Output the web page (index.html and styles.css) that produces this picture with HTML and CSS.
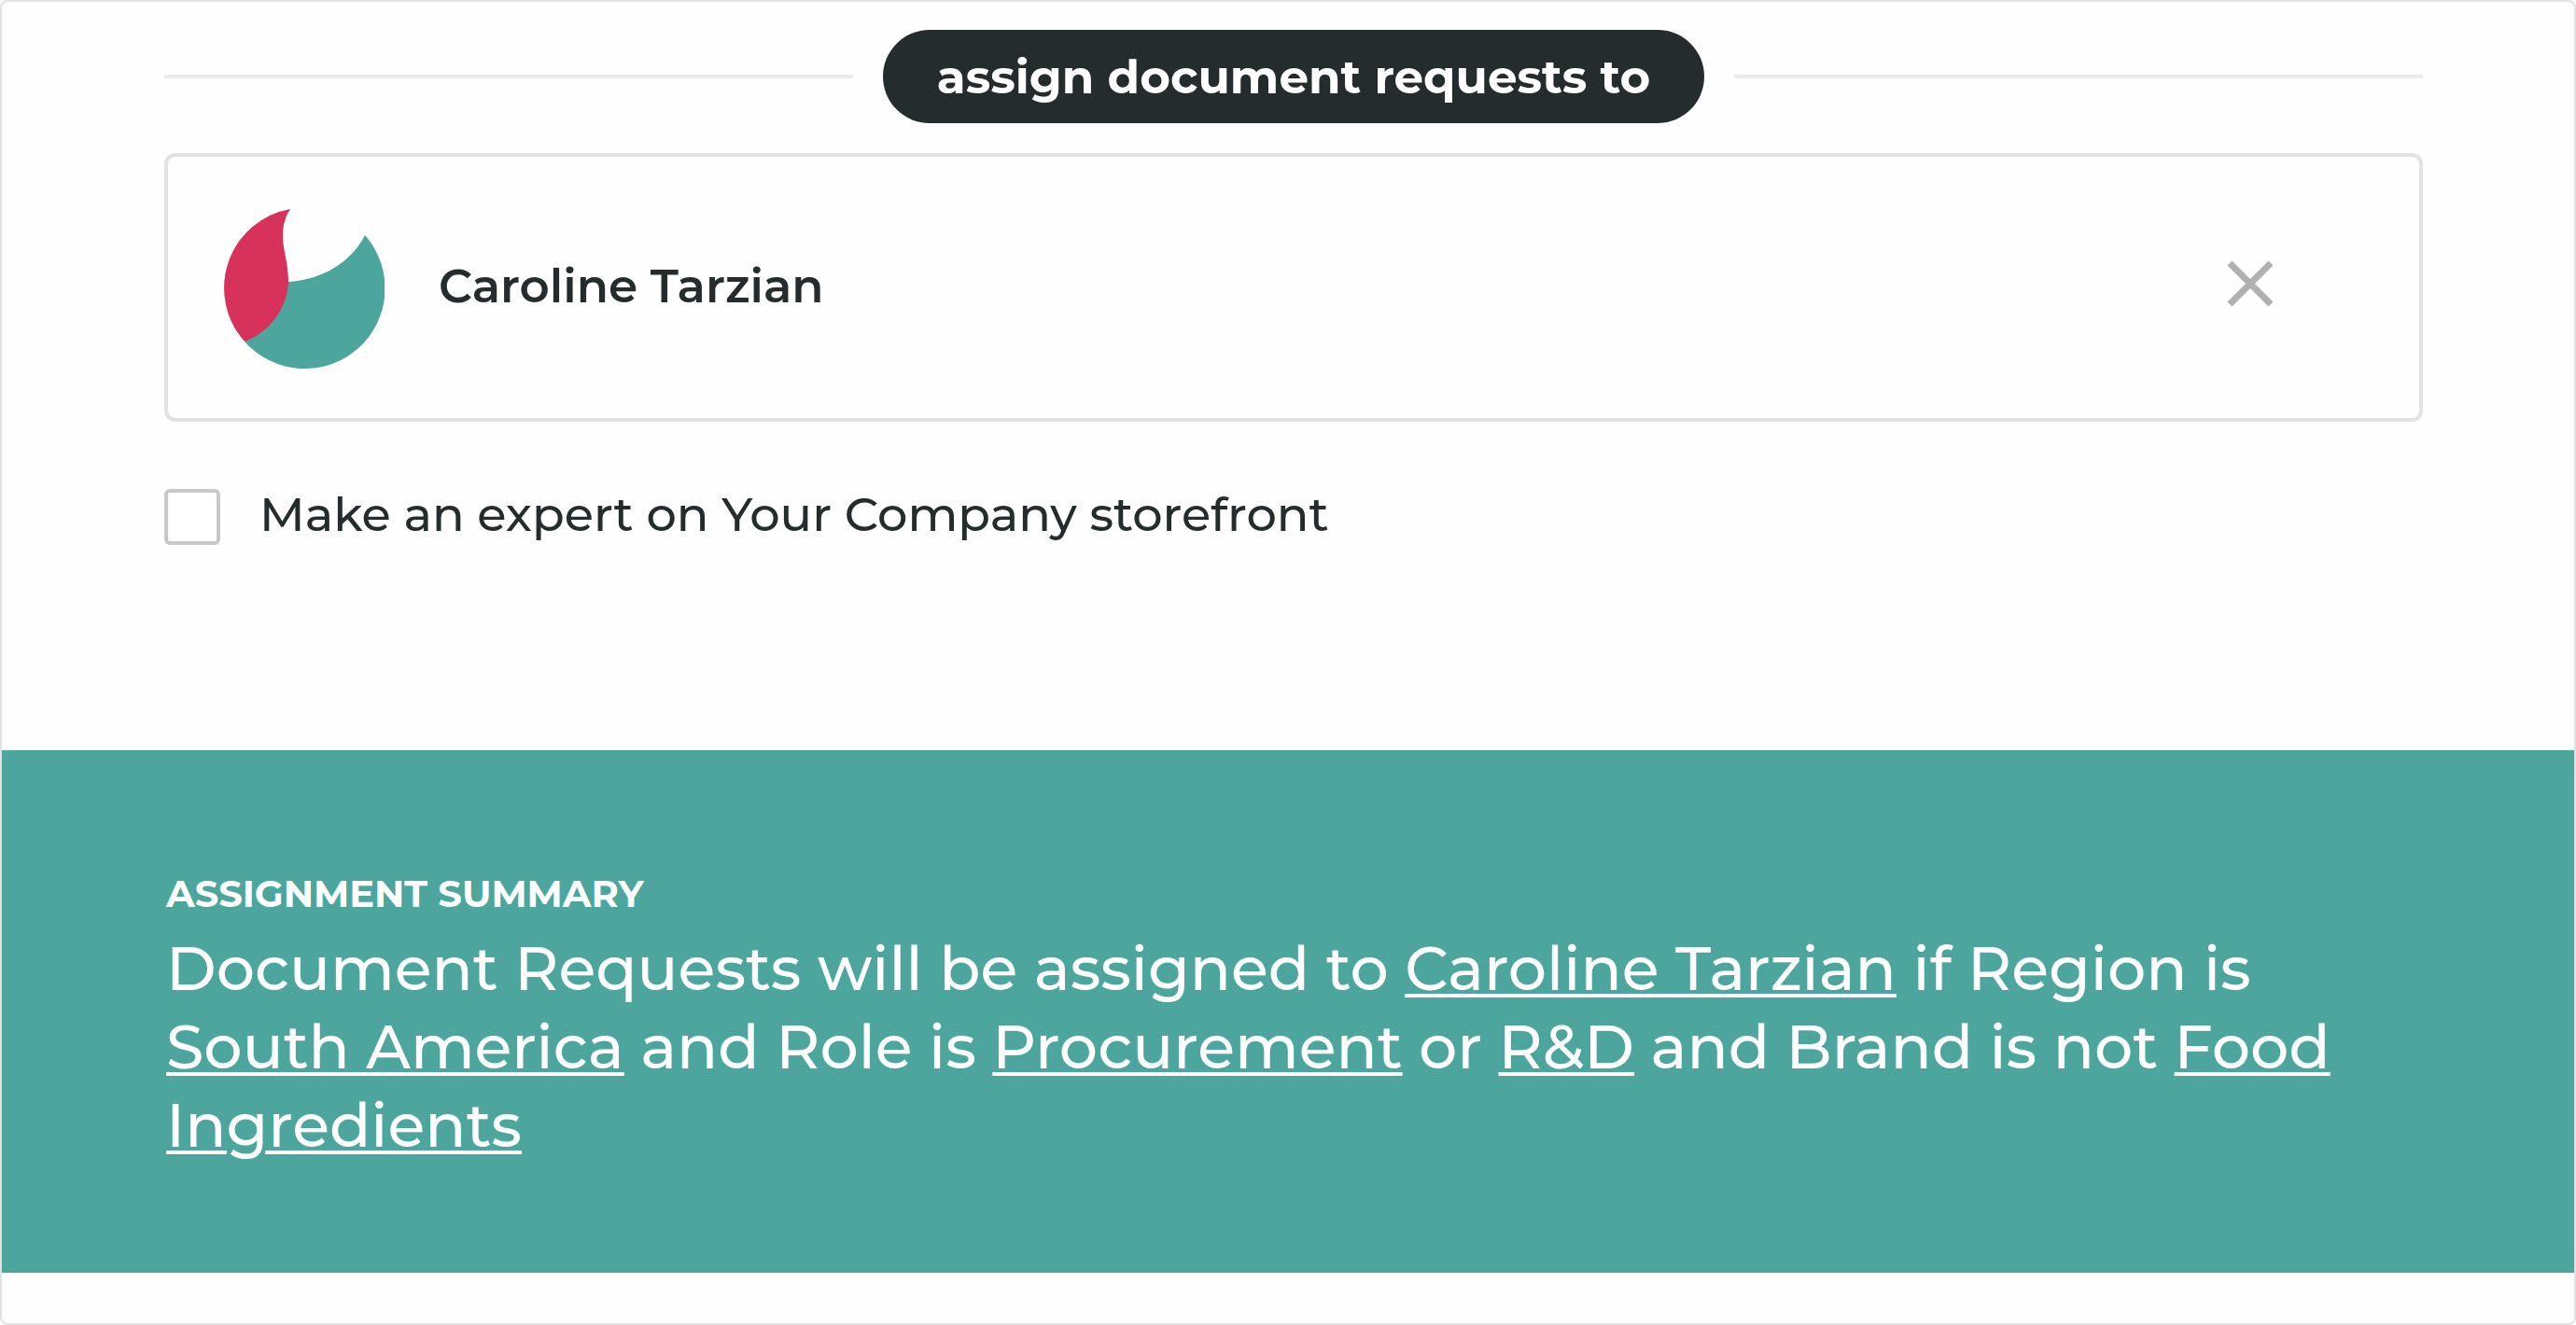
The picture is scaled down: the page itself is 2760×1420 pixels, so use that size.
FILE: index.html
```html
<!DOCTYPE html>
<html lang="en">
<head>
    <meta charset="UTF-8">
    <meta name="viewport" content="width=device-width, initial-scale=1.0">
    <title>Assign Document Requests</title>
    <link rel="stylesheet" href="styles.css">
</head>
<body>
    <main class="panel">
        <section class="assign">
            <div class="divider">
                <h1 class="divider-label">assign document requests to</h1>
            </div>

            <div class="assignee">
                <svg class="avatar" viewBox="0 0 172 172" aria-hidden="true">
                    <path fill="#4ca69e" d="M69 78C104 76 136 58 151 28A86 86 0 0 1 22 142L60 78Z"/>
                    <path fill="#d6325c" d="M71 0C63 12 62 25 64 41C67 56 69 66 69 79C67 109 47 133 22 142A86 86 0 0 1 71 0Z"/>
                </svg>
                <span class="assignee-name">Caroline Tarzian</span>
                <button class="remove-button" type="button" aria-label="Remove Caroline Tarzian">
                    <svg class="remove-icon" viewBox="0 0 50 50" aria-hidden="true">
                        <path d="M3 3L47 47M47 3L3 47"/>
                    </svg>
                </button>
            </div>

            <div class="expert">
                <input class="expert-check" type="checkbox" id="expert">
                <label class="expert-label" for="expert">Make an expert on Your Company storefront</label>
            </div>
        </section>

        <section class="summary">
            <h2 class="summary-title">ASSIGNMENT SUMMARY</h2>
            <p class="summary-text">Document Requests will be assigned to <a href="#">Caroline Tarzian</a> if Region is <a href="#">South America</a> and Role is <a href="#">Procurement</a> or <a href="#">R&amp;D</a> and Brand is not <a href="#">Food Ingredients</a></p>
        </section>
    </main>
</body>
</html>
```
FILE: styles.css
```css
* { box-sizing: border-box; }
body { margin: 0; background: #fff; color: #252c2e; font-family: Montserrat, Inter, sans-serif; }

.panel { min-height: 100vh; border: 2px solid #e2e2e2; border-radius: 8px; background: #fefefe; }

.assign { padding: 30px 162px 220px 174px; }

.divider { display: flex; align-items: center; gap: 32px; }
.divider::before, .divider::after { content: ""; flex: 1; height: 4px; background: #ebebeb; }
.divider-label { margin: 0; padding: 2px 58px 0; border-radius: 50px; background: #252c2e; color: #fff; font-size: 50px; font-weight: 700; line-height: 98px; }

.assignee { display: flex; align-items: center; height: 288px; margin-top: 32px; padding: 0 152px 4px 60px; border: 4px solid #e2e2e2; border-radius: 12px; }
.avatar { width: 172px; height: 172px; margin-top: 8px; }
.assignee-name { flex: 1; margin-left: 58px; font-size: 50px; font-weight: 600; }
.remove-button { display: flex; padding: 4px 4px 8px; border: none; background: none; cursor: pointer; }
.remove-icon { width: 50px; height: 50px; fill: none; stroke: #b0b0b0; stroke-width: 7; }

.expert { display: flex; align-items: flex-start; gap: 42px; margin-top: 68px; }
.expert-check { appearance: none; flex: none; width: 60px; height: 60px; margin: 4px 0 0; border: 4px solid #c8c8c8; border-radius: 6px; background: #fff; }
.expert-check:checked { background: #4ca69e; }
.expert-label { font-size: 51px; font-weight: 500; line-height: 62px; }

.summary { padding: 128px 162px 116px 176px; background: #4ca69e; color: #fff; }
.summary-title { margin: 0; font-size: 40px; font-weight: 700; line-height: 52px; }
.summary-text { margin: 12px 0 0; font-size: 65px; font-weight: 500; line-height: 84px; }
.summary-text a { color: inherit; text-decoration-thickness: 4px; text-underline-offset: 4px; }
```
